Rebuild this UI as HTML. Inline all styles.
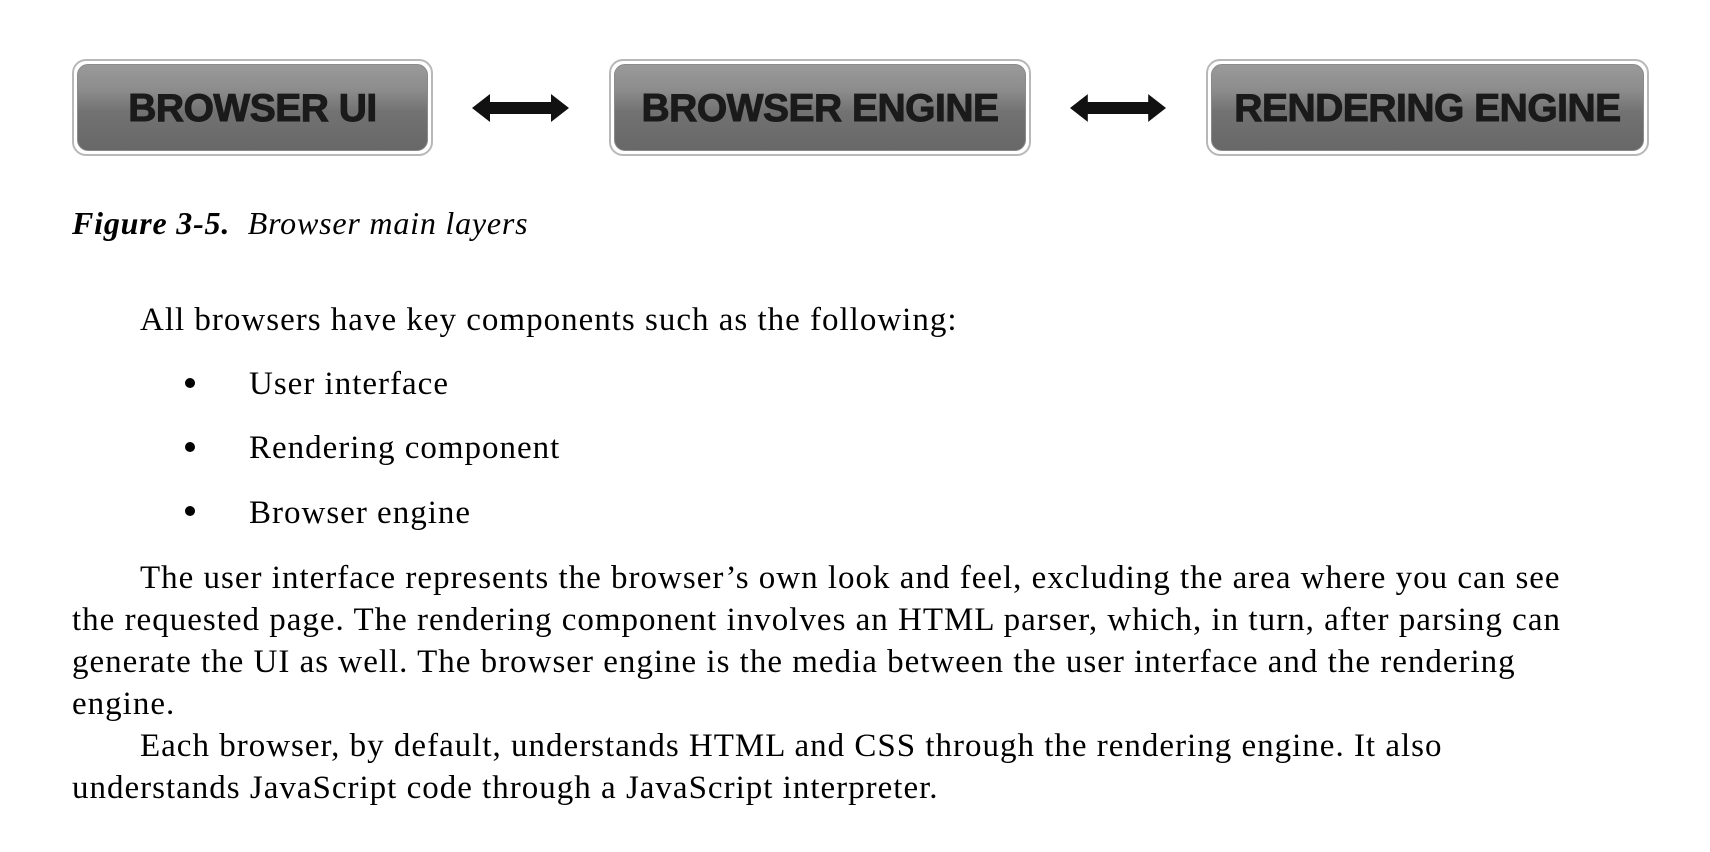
<!DOCTYPE html>
<html><head><meta charset="utf-8"><style>
html,body{margin:0;padding:0;background:#fff;width:1710px;height:852px;overflow:hidden;position:relative}
.btn{position:absolute;top:59px;height:97px;box-sizing:border-box;border-radius:14px;border:2px solid #b8b8b8;
 background:#fff;padding:3px}
.in{width:100%;height:100%;box-sizing:border-box;border-radius:11px;border:1px solid #8a8a8a;
 background:linear-gradient(180deg,#9a9a9a 0%,#8c8c8c 30%,#727272 55%,#686868 100%);
 display:flex;align-items:center;justify-content:center;
 font-family:"Liberation Sans",sans-serif;font-weight:bold;font-size:39px;color:#1a1a1a;letter-spacing:-0.5px;padding-top:2px;-webkit-text-stroke:1px #1a1a1a}
.arr{position:absolute;top:94px}
.t{position:absolute;font-family:"Liberation Serif",serif;font-size:33px;letter-spacing:1px;color:#000;white-space:nowrap;line-height:1}
.b{position:absolute;width:10px;height:10px;border-radius:50%;background:#000;left:185px}
</style></head><body>
<div class="btn" style="left:72px;width:361px"><div class="in">BROWSER UI</div></div>
<div class="btn" style="left:609px;width:422px"><div class="in">BROWSER ENGINE</div></div>
<div class="btn" style="left:1206px;width:443px"><div class="in">RENDERING ENGINE</div></div>
<svg class="arr" style="left:472px" width="97" height="28" viewBox="0 0 97 28"><path d="M0 14 L18 0 L18 8 L79 8 L79 0 L97 14 L79 28 L79 20 L18 20 L18 28 Z" fill="#111"/></svg>
<svg class="arr" style="left:1070px" width="96" height="28" viewBox="0 0 97 28"><path d="M0 14 L18 0 L18 8 L79 8 L79 0 L97 14 L79 28 L79 20 L18 20 L18 28 Z" fill="#111"/></svg>
<div class="t" style="left:72px;top:207px;font-style:italic;font-size:32px;letter-spacing:0.8px"><b>Figure 3-5.</b>&nbsp; Browser main layers</div>
<div class="t" style="left:140px;top:304px">All browsers have key components such as the following:</div>
<div class="b" style="top:378px"></div><div class="t" style="left:249px;top:368px">User interface</div>
<div class="b" style="top:442px"></div><div class="t" style="left:249px;top:432px">Rendering component</div>
<div class="b" style="top:506px"></div><div class="t" style="left:249px;top:497px">Browser engine</div>
<div class="t" style="left:140px;top:562px">The user interface represents the browser’s own look and feel, excluding the area where you can see</div>
<div class="t" style="left:72px;top:604px">the requested page. The rendering component involves an HTML parser, which, in turn, after parsing can</div>
<div class="t" style="left:72px;top:646px">generate the UI as well. The browser engine is the media between the user interface and the rendering</div>
<div class="t" style="left:72px;top:688px">engine.</div>
<div class="t" style="left:140px;top:730px">Each browser, by default, understands HTML and CSS through the rendering engine. It also</div>
<div class="t" style="left:72px;top:772px">understands JavaScript code through a JavaScript interpreter.</div>
</body></html>
